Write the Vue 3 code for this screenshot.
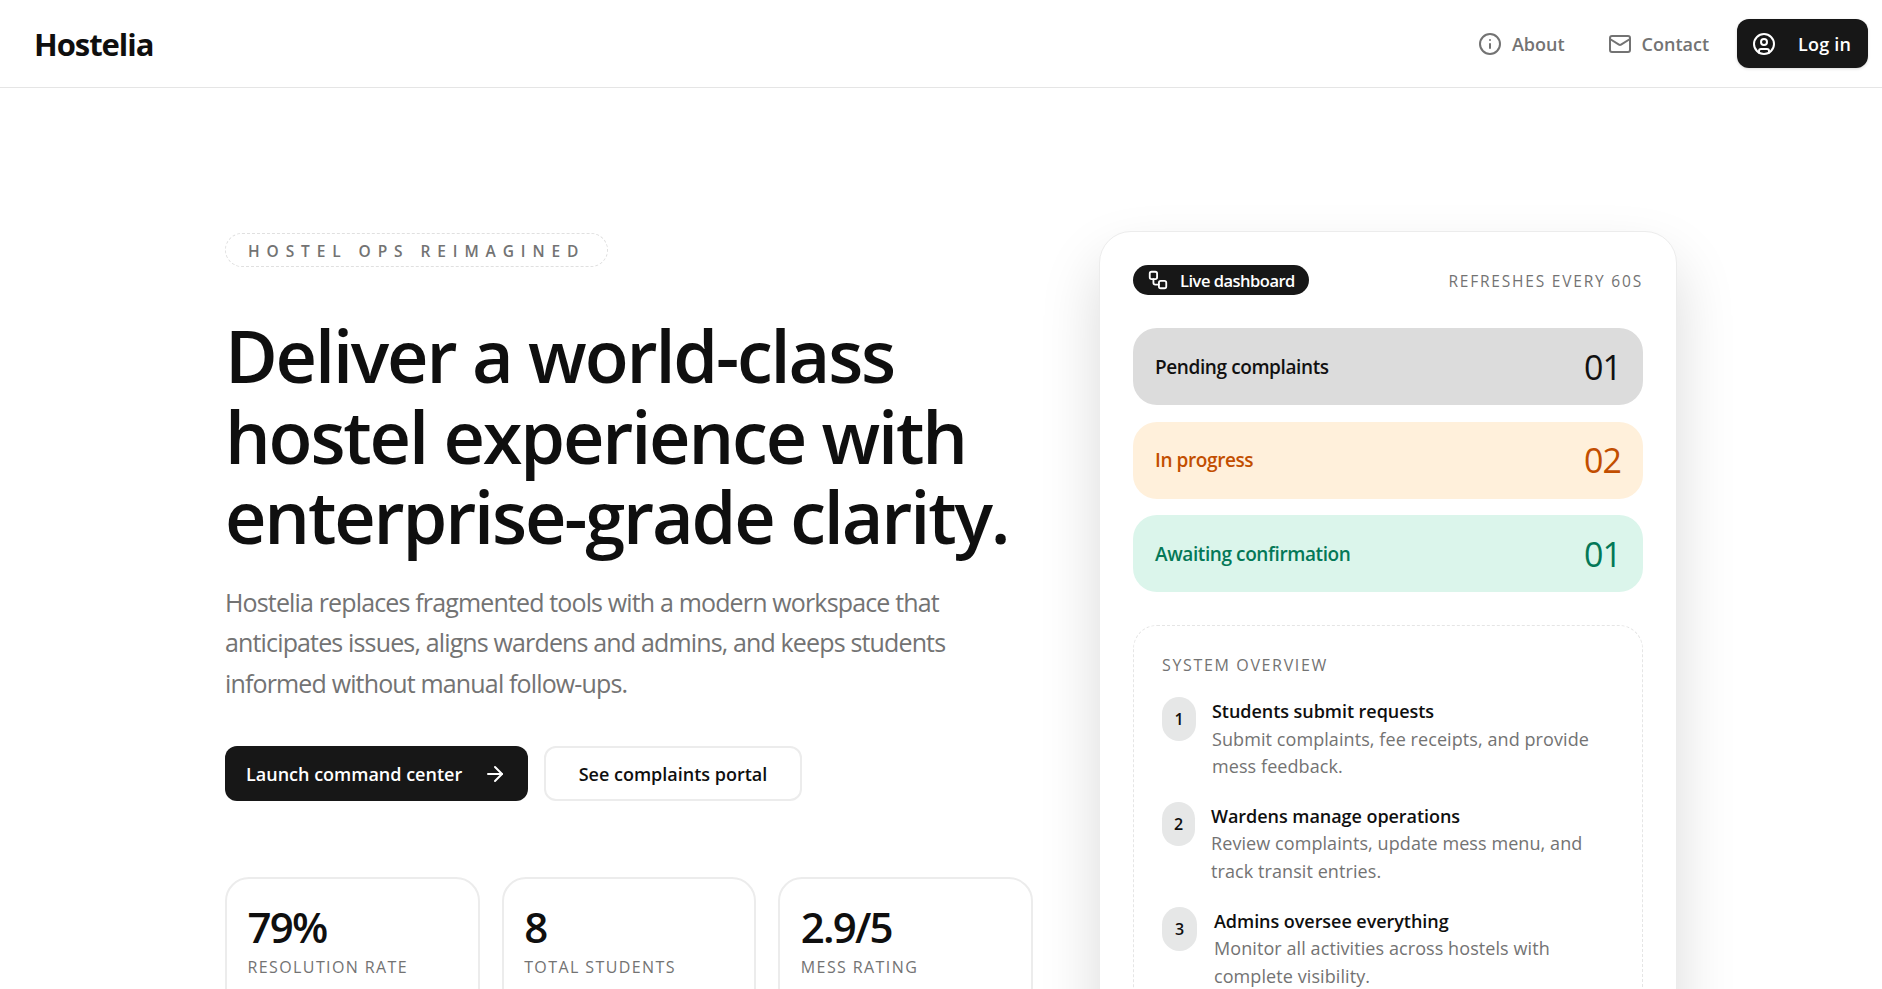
<template>
  <div class="page">
    <header class="topbar">
      <div class="logo">Hostelia</div>
      <nav class="nav">
        <a class="nav-link about">
          <svg class="icon" viewBox="0 0 24 24"><circle cx="12" cy="12" r="10" /><path d="M12 16v-4" /><path d="M12 8h.01" /></svg>
          About
        </a>
        <a class="nav-link contact">
          <svg class="icon" viewBox="0 0 24 24"><rect x="2" y="4" width="20" height="16" rx="2" /><path d="m22 7-8.97 5.7a1.94 1.94 0 0 1-2.06 0L2 7" /></svg>
          Contact
        </a>
        <button class="login">
          <svg class="icon" viewBox="0 0 24 24"><circle cx="12" cy="12" r="10" /><circle cx="12" cy="10" r="3" /><path d="M7 20.662V19a2 2 0 0 1 2-2h6a2 2 0 0 1 2 2v1.662" /></svg>
          Log in
        </button>
      </nav>
    </header>

    <main class="hero">
      <section class="intro">
        <div class="eyebrow">HOSTEL OPS REIMAGINED</div>
        <h1>Deliver a world-class hostel experience with enterprise-grade clarity.</h1>
        <p class="lead">Hostelia replaces fragmented tools with a modern workspace that anticipates issues, aligns wardens and admins, and keeps students informed without manual follow-ups.</p>
        <div class="actions">
          <button class="btn primary">
            Launch command center
            <svg class="icon arrow" viewBox="0 0 24 24"><path d="M5 12h14" /><path d="m12 5 7 7-7 7" /></svg>
          </button>
          <button class="btn secondary">See complaints portal</button>
        </div>
        <div class="stats">
          <div v-for="s in stats" :key="s.label" class="stat">
            <div class="stat-value">{{ s.value }}</div>
            <div class="stat-label">{{ s.label }}</div>
          </div>
        </div>
      </section>

      <aside class="panel">
        <div class="panel-head">
          <span class="live">
            <svg class="icon" viewBox="0 0 24 24"><rect x="3" y="3" width="8" height="8" rx="2" /><path d="M7 11v4a2 2 0 0 0 2 2h4" /><rect x="13" y="13" width="8" height="8" rx="2" /></svg>
            Live dashboard
          </span>
          <span class="refresh">REFRESHES EVERY 60S</span>
        </div>
        <div class="rows">
          <div v-for="r in rows" :key="r.label" class="row" :class="r.tone">
            <span class="row-label">{{ r.label }}</span>
            <span class="row-count">{{ r.count }}</span>
          </div>
        </div>
        <div class="overview">
          <div class="overview-title">SYSTEM OVERVIEW</div>
          <div v-for="(s, i) in steps" :key="s.title" class="step">
            <span class="badge" :class="'badge-' + (i + 1)">{{ i + 1 }}</span>
            <div class="step-body">
              <div class="step-title">{{ s.title }}</div>
              <div class="step-text">{{ s.text }}</div>
            </div>
          </div>
        </div>
      </aside>
    </main>
  </div>
</template>

<script setup>
const stats = [
  { value: '79%', label: 'RESOLUTION RATE' },
  { value: '8', label: 'TOTAL STUDENTS' },
  { value: '2.9/5', label: 'MESS RATING' }
]

const rows = [
  { label: 'Pending complaints', count: '01', tone: 'grey' },
  { label: 'In progress', count: '02', tone: 'amber' },
  { label: 'Awaiting confirmation', count: '01', tone: 'green' }
]

const steps = [
  { title: 'Students submit requests', text: 'Submit complaints, fee receipts, and provide mess feedback.' },
  { title: 'Wardens manage operations', text: 'Review complaints, update mess menu, and track transit entries.' },
  { title: 'Admins oversee everything', text: 'Monitor all activities across hostels with complete visibility.' }
]
</script>

<style>
html, body {
  margin: 0;
  background: #fff;
}
</style>

<style scoped>
.page {
  height: 100vh;
  overflow: hidden;
  font-family: "Open Sans", "Noto Sans", sans-serif;
  color: #0f0f0f;
  background: #fff;
}

.icon {
  width: 24px;
  height: 24px;
  fill: none;
  stroke: currentColor;
  stroke-width: 2;
  stroke-linecap: round;
  stroke-linejoin: round;
  flex-shrink: 0;
}

.topbar {
  height: 87px;
  border-bottom: 1px solid #e5e5e5;
  display: flex;
  align-items: center;
  justify-content: space-between;
  padding: 0 14px 0 34px;
}

.logo {
  font-size: 31px;
  font-weight: 700;
  letter-spacing: -1.05px;
}

.nav {
  display: flex;
  align-items: center;
}

.nav-link {
  display: flex;
  align-items: center;
  gap: 10px;
  font-size: 18px;
  font-weight: 600;
  color: #737373;
}

.about {
  margin-right: 43px;
}

.contact {
  margin-right: 28px;
}

.login {
  display: flex;
  align-items: center;
  gap: 22px;
  width: 131px;
  height: 49px;
  padding: 0 15px;
  border: none;
  border-radius: 12px;
  background: #171717;
  color: #fff;
  font: 600 18px "Open Sans", sans-serif;
  letter-spacing: 0.2px;
  white-space: nowrap;
  box-shadow: 0 1px 3px rgba(0, 0, 0, 0.15);
}

.hero {
  display: grid;
  grid-template-columns: 808px 578px;
  column-gap: 66px;
  padding: 143px 0 0 225px;
  align-items: start;
}

.eyebrow {
  box-sizing: border-box;
  width: 383px;
  height: 34px;
  margin-top: 2px;
  line-height: 34px;
  padding-left: 22px;
  border: 1px dashed #e0e0e0;
  border-radius: 17px;
  font-size: 15.5px;
  font-weight: 600;
  letter-spacing: 6.9px;
  color: #737373;
  white-space: nowrap;
}

h1 {
  margin: 48px 0 0;
  font-size: 72px;
  font-weight: 600;
  line-height: 80.6px;
  letter-spacing: -2.15px;
}

.lead {
  margin: 25px 0 0;
  font-size: 25px;
  line-height: 40.5px;
  letter-spacing: -0.85px;
  color: #737373;
}

.actions {
  display: flex;
  gap: 16px;
  margin-top: 43px;
}

.btn {
  box-sizing: border-box;
  height: 55px;
  display: flex;
  align-items: center;
  border-radius: 12px;
  font: 600 18px "Open Sans", sans-serif;
  white-space: nowrap;
}

.primary {
  width: 303px;
  padding: 0 21px;
  gap: 21px;
  border: none;
  background: #171717;
  color: #fff;
}

.secondary {
  width: 258px;
  justify-content: center;
  border: 2px solid #ececec;
  background: #fff;
  color: #0f0f0f;
}

.stats {
  display: grid;
  grid-template-columns: repeat(3, 1fr);
  gap: 22px;
  margin-top: 76px;
}

.stat {
  border: 2px solid #ececec;
  border-radius: 24px;
  padding: 24px 20.5px;
  height: 150px;
}

.stat-value {
  font-size: 42px;
  font-weight: 600;
  line-height: 48px;
  letter-spacing: -1.8px;
}

.stat-label {
  margin-top: 5px;
  font-size: 16px;
  letter-spacing: 1.4px;
  color: #737373;
}

.panel {
  box-sizing: border-box;
  padding: 33px 33px 40px;
  border: 1px solid #ececec;
  border-radius: 32px;
  background: #fff;
  box-shadow: 0 30px 60px rgba(0, 0, 0, 0.15);
}

.panel-head {
  display: flex;
  align-items: center;
  justify-content: space-between;
  height: 30px;
}

.live {
  display: flex;
  align-items: center;
  gap: 11px;
  height: 30px;
  padding: 0 14px;
  border-radius: 15px;
  background: #171717;
  color: #fff;
  font-size: 16.5px;
  font-weight: 600;
  letter-spacing: -0.5px;
}

.live .icon {
  width: 22px;
  height: 22px;
}

.refresh {
  padding-top: 1px;
  font-size: 15.5px;
  letter-spacing: 1.8px;
  color: #737373;
}

.rows {
  display: flex;
  flex-direction: column;
  gap: 16.5px;
  margin-top: 33px;
}

.row {
  box-sizing: border-box;
  height: 77px;
  padding: 0 22px;
  display: flex;
  align-items: center;
  justify-content: space-between;
  border-radius: 24px;
}

.row-label {
  font-size: 19px;
  font-weight: 600;
  letter-spacing: -0.4px;
}

.row-count {
  font-size: 34px;
  font-weight: 500;
  letter-spacing: -1px;
}

.grey {
  background: #dcdcdc;
  color: #111;
}

.amber {
  background: #fff0db;
  color: #c24e00;
}

.green {
  background: #dbf5eb;
  color: #047857;
}

.overview {
  margin-top: 33px;
  padding: 28px 28px 60px;
  border: 1px dashed #e5e5e5;
  border-radius: 24px;
}

.overview-title {
  font-size: 16px;
  letter-spacing: 1.65px;
  color: #737373;
}

.step {
  display: flex;
  gap: 16px;
  margin-top: 21px;
}

.step:first-of-type {
  margin-top: 17px;
}

.badge {
  height: 44px;
  width: 34px;
  border-radius: 999px;
  background: #e6e7e7;
  display: flex;
  align-items: center;
  justify-content: center;
  font-size: 16px;
  font-weight: 600;
  flex-shrink: 0;
}

.badge-2 {
  width: 33px;
}

.badge-3 {
  width: 35px;
  margin-right: 1px;
}

.step-body {
  padding-top: 1px;
}

.step-title {
  font-size: 18px;
  font-weight: 600;
  line-height: 27.6px;
  letter-spacing: -0.05px;
}

.step-text {
  font-size: 18px;
  line-height: 27.6px;
  letter-spacing: 0.08px;
  color: #737373;
}
</style>
